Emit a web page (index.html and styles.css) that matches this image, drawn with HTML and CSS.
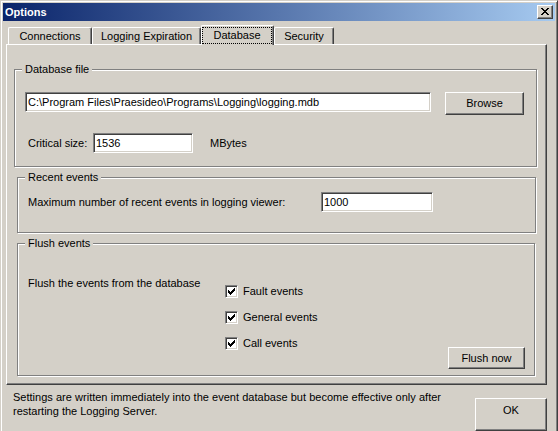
FILE: index.html
```html
<!DOCTYPE html>
<html lang="en">
<head>
<meta charset="utf-8">
<title>Options</title>
<link rel="stylesheet" href="styles.css">
</head>
<body>
<div class="window">
  <div class="titlebar">
    <span class="title">Options</span>
    <button class="btn close" type="button" aria-label="Close">
      <svg width="8" height="7" viewBox="0 0 8 7" shape-rendering="crispEdges"><path fill="#000" d="M0 0h2v1H0z M6 0h2v1H6z M1 1h2v1H1z M5 1h2v1H5z M2 2h4v1H2z M3 3h2v1H3z M2 4h4v1H2z M1 5h2v1H1z M5 5h2v1H5z M0 6h2v1H0z M6 6h2v1H6z"/></svg>
    </button>
  </div>
  <div class="client">
    <div class="tabs">
      <div class="tabstrip">
        <div class="tab t-conn">Connections</div>
        <div class="tab t-log">Logging Expiration</div>
        <div class="tab t-db selected"><span class="focus">Database</span></div>
        <div class="tab t-sec">Security</div>
      </div>
      <div class="panel">
        <div class="group g-db">
          <span class="legend">Database file</span>
          <div class="row row-path">
            <input class="field f-path" type="text" value="C:\Program Files\Praesideo\Programs\Logging\logging.mdb">
            <button class="btn browse" type="button">Browse</button>
          </div>
          <div class="row row-size">
            <span class="lbl lbl-size">Critical size:</span>
            <input class="field f-size" type="text" value="1536">
            <span class="unit">MBytes</span>
          </div>
        </div>
        <div class="group g-recent">
          <span class="legend">Recent events</span>
          <div class="row row-recent">
            <span class="lbl lbl-recent">Maximum number of recent events in logging viewer:</span>
            <input class="field f-recent" type="text" value="1000">
          </div>
        </div>
        <div class="group g-flush">
          <span class="legend">Flush events</span>
          <div class="flush-body">
            <span class="flush-text">Flush the events from the database</span>
            <div class="checks">
              <div class="check"><span class="cb"><svg width="7" height="7" viewBox="0 0 7 7" shape-rendering="crispEdges"><path fill="#000" d="M6 0h1v1H6z M5 1h2v1H5z M0 2h1v1H0z M4 2h3v1H4z M0 3h2v1H0z M3 3h3v1H3z M0 4h5v1H0z M1 5h3v1H1z M2 6h1v1H2z"/></svg></span><span class="cl">Fault events</span></div>
              <div class="check"><span class="cb"><svg width="7" height="7" viewBox="0 0 7 7" shape-rendering="crispEdges"><path fill="#000" d="M6 0h1v1H6z M5 1h2v1H5z M0 2h1v1H0z M4 2h3v1H4z M0 3h2v1H0z M3 3h3v1H3z M0 4h5v1H0z M1 5h3v1H1z M2 6h1v1H2z"/></svg></span><span class="cl">General events</span></div>
              <div class="check"><span class="cb"><svg width="7" height="7" viewBox="0 0 7 7" shape-rendering="crispEdges"><path fill="#000" d="M6 0h1v1H6z M5 1h2v1H5z M0 2h1v1H0z M4 2h3v1H4z M0 3h2v1H0z M3 3h3v1H3z M0 4h5v1H0z M1 5h3v1H1z M2 6h1v1H2z"/></svg></span><span class="cl">Call events</span></div>
            </div>
            <button class="btn flush" type="button">Flush now</button>
          </div>
        </div>
      </div>
    </div>
    <div class="footer">
      <p class="note">Settings are written immediately into the event database but become effective only after restarting the Logging Server.</p>
      <button class="btn ok" type="button">OK</button>
    </div>
  </div>
</div>
</body>
</html>
```
FILE: styles.css
```css
* { box-sizing: border-box; }
html, body { margin: 0; padding: 0; overflow: hidden; }
body {
  font-family: "Liberation Sans", Arial, sans-serif;
  font-size: 11px;
  line-height: 13px;
  color: #000;
  background: #D4D0C8;
}

.window {
  width: 558px;
  height: 434px;
  background: #D4D0C8;
  border: 1px solid;
  border-color: #D4D0C8 #404040 #404040 #D4D0C8;
  box-shadow: inset 1px 1px 0 #fff, inset -1px -1px 0 #808080;
  padding: 2px;
  display: flex;
  flex-direction: column;
}

.titlebar {
  height: 18px;
  flex: none;
  display: flex;
  align-items: center;
  padding-left: 2px;
  background: linear-gradient(to right, #0A246A, #A6CAF0);
}
.title { color: #fff; font-weight: bold; font-size: 11px; }

.btn {
  font: inherit;
  color: #000;
  background: #D4D0C8;
  border: 1px solid;
  border-color: #fff #404040 #404040 #fff;
  box-shadow: inset -1px -1px 0 #808080;
  padding: 0;
  margin: 0;
  border-radius: 0;
  display: flex;
  align-items: center;
  justify-content: center;
}
.close {
  margin-left: auto;
  margin-right: 2px;
  width: 16px;
  height: 14px;
  align-items: flex-start;
  padding-top: 2px;
}
.close svg { display: block; }

.client {
  margin-top: 1px;
  padding: 3px 0 0 3px;
  flex: 1;
  display: flex;
  flex-direction: column;
}

.tabs { width: 541px; }
.tabstrip {
  display: flex;
  align-items: flex-end;
  height: 19px;
  padding-left: 2px;
}
.tab {
  height: 17px;
  border: 1px solid;
  border-bottom: none;
  border-color: #fff #404040 #fff #fff;
  box-shadow: inset -1px 0 0 #808080;
  border-radius: 2px 2px 0 0;
  text-align: center;
  padding-top: 2px;
  white-space: nowrap;
}
.t-conn { width: 84px; }
.t-log { width: 109px; }
.t-db { width: 73px; }
.t-sec { width: 60px; }
.tab.selected {
  height: 20px;
  margin-bottom: -1px;
  padding: 0;
  position: relative;
  z-index: 1;
  background: #D4D0C8;
}
.focus {
  display: block;
  margin: 1px 1px 0 0;
  height: 17px;
  border: 1px dotted #000;
  padding-top: 1px;
}

.panel {
  height: 341px;
  border: 1px solid;
  border-color: #fff #404040 #404040 #fff;
  box-shadow: inset -1px -1px 0 #808080;
  display: flex;
  flex-direction: column;
}

.group {
  border: 1px solid #808080;
  box-shadow: inset 1px 1px 0 #fff, 1px 1px 0 #fff;
  display: flex;
  flex-direction: column;
  flex: none;
}
.legend {
  align-self: flex-start;
  margin: -7px 0 0 7px;
  padding: 0 3px;
  height: 13px;
  background: #D4D0C8;
  white-space: nowrap;
}
.g-db { margin: 24px 0 0 7px; width: 523px; height: 98px; }
.g-recent { margin: 10px 0 0 10px; width: 519px; height: 56px; }
.g-flush { margin: 10px 0 0 10px; width: 518px; height: 133px; }

.row { display: flex; align-items: center; }
.row-path { margin: 16px 0 0 10px; align-items: flex-start; height: 23px; }
.row-size { margin: 18px 0 0 13px; height: 20px; }
.row-recent { margin: 8px 0 0 10px; height: 20px; }

.field {
  font: inherit;
  color: #000;
  background: #fff;
  height: 20px;
  margin: 0;
  padding: 0 0 0 2px;
  border: 1px solid;
  border-color: #808080 #fff #fff #808080;
  box-shadow: inset 1px 1px 0 #404040, inset -1px -1px 0 #D4D0C8;
  border-radius: 0;
  outline: none;
}
.f-path { width: 406px; }
.f-size { width: 100px; }
.f-recent { width: 112px; }

.browse { margin-left: 14px; width: 79px; height: 23px; }
.lbl-size { width: 65px; }
.unit { margin-left: 17px; }
.lbl-recent { width: 293px; white-space: nowrap; }

.flush-body { display: flex; flex: 1; }
.flush-text { margin: 27px 0 0 10px; width: 197px; white-space: nowrap; }
.checks {
  margin-top: 35px;
  display: flex;
  flex-direction: column;
  gap: 13px;
}
.check { display: flex; align-items: center; height: 13px; }
.cb {
  width: 13px;
  height: 13px;
  background: #fff;
  border: 1px solid;
  border-color: #808080 #fff #fff #808080;
  box-shadow: inset 1px 1px 0 #404040, inset -1px -1px 0 #D4D0C8;
  padding: 2px;
  flex: none;
}
.cb svg { display: block; }
.cl { margin-left: 5px; white-space: nowrap; }

.flush {
  margin: 0 9px 6px auto;
  align-self: flex-end;
  width: 77px;
  height: 22px;
}

.footer { display: flex; align-items: flex-start; }
.note {
  margin: 5px 0 0 7px;
  width: 428px;
  line-height: 14px;
  text-align: justify;
}
.ok {
  margin: 13px 8px 0 auto;
  width: 72px;
  height: 33px;
  padding-bottom: 9px;
}
```
